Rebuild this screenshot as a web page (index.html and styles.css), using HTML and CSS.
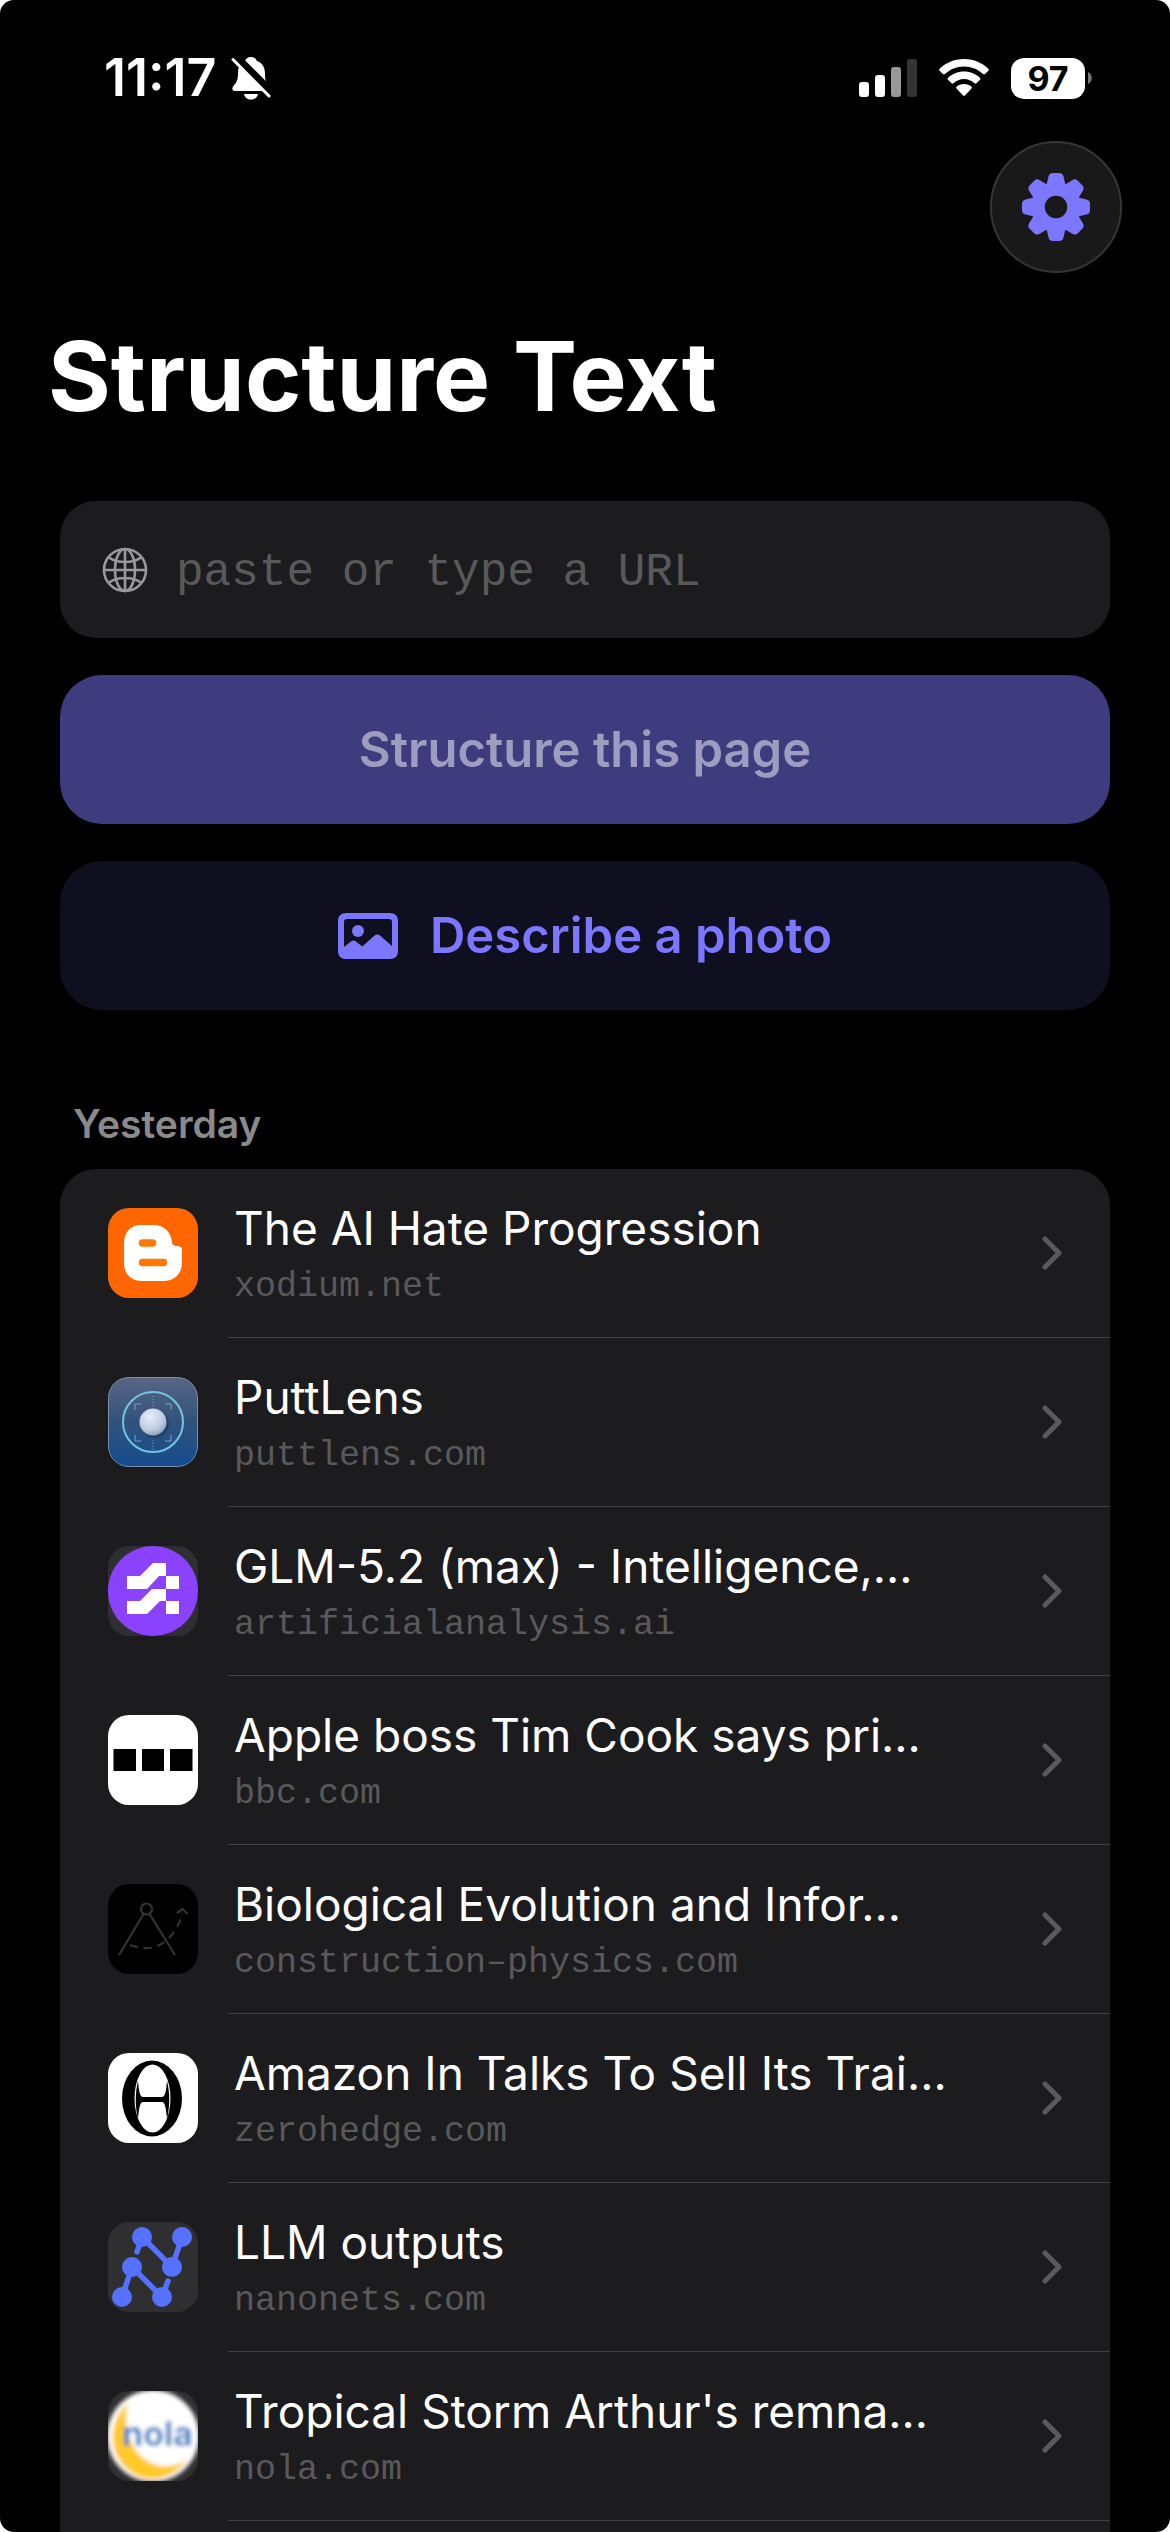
FILE: index.html
```html
<!DOCTYPE html>
<html lang="en">
<head>
    <meta charset="UTF-8">
    <meta name="viewport" content="width=device-width, initial-scale=1.0">
    <title>Structure Text</title>
    <link rel="stylesheet" href="styles.css">
</head>
<body>
    <div class="screen">
        <header class="status-bar">
            <div class="status-left">
                <span class="clock">11:17</span>
                <svg class="bell" viewBox="0 0 40 44" aria-hidden="true">
                    <path d="M20 1c3 0 5 1.500 6 4 6 2 8 7 8 13 0 6 1 9 4 12 2 2 1 5-1 5H4c-3 0-3.500-3-1.500-5C5 27 7 24 7 18 7 11 9 7 14 5c1-2.500 3-4 6-4z" fill="#fff"/>
                    <path d="M13 38h14c-1 4-3.500 5.500-7 5.500S14 42 13 38z" fill="#fff"/>
                    <path d="M4 0L41 37" stroke="#000" stroke-width="8"/>
                    <path d="M2 3.500L38 40" stroke="#fff" stroke-width="3" stroke-linecap="round"/>
                </svg>
            </div>
            <div class="status-right">
                <svg class="signal" viewBox="0 0 58 38" aria-hidden="true">
                    <rect x="0" y="23" width="10" height="15" rx="3" fill="#fff"/>
                    <rect x="16" y="16" width="10" height="22" rx="3" fill="#fff"/>
                    <rect x="32" y="8" width="10" height="30" rx="3" fill="#999"/>
                    <rect x="48" y="0" width="10" height="38" rx="3" fill="#333"/>
                </svg>
                <svg class="wifi" viewBox="0 0 50 38" aria-hidden="true">
                    <path d="M25 0C15 0 6.500 4 .6 9.800c-.6.600-.6 1.300 0 1.900l3.400 3.400c.6.600 1.300.600 1.900 0C11 10.300 17.500 7.500 25 7.500s14 2.800 19.100 7.600c.6.600 1.300.600 1.900 0l3.400-3.400c.6-.600.6-1.300 0-1.900C43.500 4 35 0 25 0z" fill="#fff"/>
                    <path d="M25 12.500c-6.500 0-12 2.500-16 6.300-.6.600-.6 1.300 0 1.900l3.600 3.500c.6.600 1.200.600 1.900.1C17.300 21.800 20.900 20 25 20s7.700 1.800 10.500 4.300c.7.500 1.300.500 1.900-.1l3.600-3.500c.6-.600.6-1.300 0-1.900-4-3.800-9.500-6.300-16-6.300z" fill="#fff"/>
                    <path d="M25 25c-3 0-5.500 1-7.500 2.700-.6.600-.6 1.300 0 1.900l6.600 6.900c.5.600 1.300.600 1.800 0l6.600-6.900c.6-.600.6-1.300 0-1.900C30.500 26 28 25 25 25z" fill="#fff"/>
                </svg>
                <div class="battery">
                    <span class="battery-level">97</span>
                    <svg class="battery-cap" viewBox="0 0 4 12" aria-hidden="true"><path d="M0 0c5 2 5 10 0 12z" fill="#777"/></svg>
                </div>
            </div>
        </header>

        <nav class="toolbar">
            <button class="settings" type="button" aria-label="Settings">
                <svg viewBox="-34 -34 68 68" aria-hidden="true">
                    <g fill="#7b78ff">
                        <path id="tooth" d="M-10-20L-7.500-30.500Q-6.500-34-3.500-34H3.500Q6.500-34 7.500-30.500L10-20z"/>
                        <use href="#tooth" transform="rotate(45)"/>
                        <use href="#tooth" transform="rotate(90)"/>
                        <use href="#tooth" transform="rotate(135)"/>
                        <use href="#tooth" transform="rotate(180)"/>
                        <use href="#tooth" transform="rotate(225)"/>
                        <use href="#tooth" transform="rotate(270)"/>
                        <use href="#tooth" transform="rotate(315)"/>
                    </g>
                    <circle r="18" fill="none" stroke="#7b78ff" stroke-width="13.500"/>
                </svg>
            </button>
        </nav>

        <main>
            <h1>Structure Text</h1>

            <form class="actions">
                <label class="url-field">
                    <svg viewBox="0 0 46 46" fill="none" stroke="#98989e" stroke-width="2.600" aria-hidden="true">
                        <circle cx="23" cy="23" r="21"/>
                        <ellipse cx="23" cy="23" rx="10" ry="21"/>
                        <path d="M23 2v42M2 23h42M7 10.500c8 6 24 6 32 0M7 35.500c8-6 24-6 32 0"/>
                    </svg>
                    <input type="text" placeholder="paste or type a URL" aria-label="URL">
                </label>
                <button class="btn btn-primary" type="submit" disabled>Structure this page</button>
                <button class="btn btn-secondary" type="button">
                    <svg viewBox="0 0 60 46" aria-hidden="true">
                        <path fill-rule="evenodd" d="M8 0h44c5 0 8 3 8 8v30c0 5-3 8-8 8H8c-5 0-8-3-8-8V8c0-5 3-8 8-8zM9 6C7 6 6 7 6 9V34l7-5.500c1.800-1.400 3.200-1.400 5 0l6.300 5L36 23c2.200-1.900 4.300-1.900 6.500 0L54 33V9C54 7 53 6 51 6z" fill="#7b78ff"/>
                        <circle cx="20" cy="18" r="6" fill="#7b78ff"/>
                    </svg>
                    <span>Describe a photo</span>
                </button>
            </form>

            <section class="history">
                <h2>Yesterday</h2>
                <ul class="list">
                    <li>
                        <a href="#">
                            <svg class="favicon" viewBox="0 0 90 90" aria-hidden="true">
                                <rect width="90" height="90" fill="#f60"/>
                                <path d="M33 17h13c10 0 17 7 18 17 0 3 2 4 5 4 3 0 5 1 5 4v13c0 11-8 18-18 18H34c-11 0-18-7-18-18V35c0-11 7-18 17-18z" fill="#fff"/>
                                <path d="M34.500 35h10M34.500 54.500h21" stroke="#f70" stroke-width="7.500" stroke-linecap="round"/>
                            </svg>
                            <span class="text"><span class="title">The AI Hate Progression</span><span class="domain">xodium.net</span></span>
                            <svg class="chevron" viewBox="0 0 20 34" aria-hidden="true"><path d="M3 3L17 17L3 31"/></svg>
                        </a>
                    </li>
                    <li>
                        <a href="#">
                            <svg class="favicon" viewBox="0 0 90 90" aria-hidden="true">
                                <defs>
                                    <linearGradient id="sky" x1="0" y1="0" x2="0" y2="1"><stop offset="0" stop-color="#5a6584"/><stop offset=".5" stop-color="#31527c"/><stop offset="1" stop-color="#154c8f"/></linearGradient>
                                    <radialGradient id="ball" cx=".4" cy=".3" r=".8"><stop offset="0" stop-color="#e8eefa"/><stop offset=".6" stop-color="#c0cde0"/><stop offset="1" stop-color="#7e94b3"/></radialGradient>
                                </defs>
                                <rect width="90" height="90" fill="url(#sky)"/>
                                <rect x=".5" y=".5" width="89" height="89" rx="20" fill="none" stroke="#7d8dad"/>
                                <circle cx="45" cy="45" r="30" fill="none" stroke="#74c5df" stroke-width="2"/>
                                <path d="M45 19v12M45 60v13" stroke="#6fb5d2" stroke-dasharray="1 2"/>
                                <path d="M27 33v-6h6M57 27h6v6M63 58v6h-6M33 64h-6v-6" fill="none" stroke="#6da8c8"/>
                                <circle cx="47" cy="47" r="14" fill="#244367"/>
                                <circle cx="45" cy="45" r="13.500" fill="url(#ball)"/>
                            </svg>
                            <span class="text"><span class="title">PuttLens</span><span class="domain">puttlens.com</span></span>
                            <svg class="chevron" viewBox="0 0 20 34" aria-hidden="true"><path d="M3 3L17 17L3 31"/></svg>
                        </a>
                    </li>
                    <li>
                        <a href="#">
                            <svg class="favicon" viewBox="0 0 90 90" aria-hidden="true">
                                <circle cx="45" cy="45" r="45" fill="#8a42ff"/>
                                <path d="M19 30h13l13-13h13v13h13v13H58V30h-7L39 43H19zM19 55h13l12-12h14v12h13v13H58V55h-6L39 68H19z" fill="#fff"/>
                            </svg>
                            <span class="text"><span class="title">GLM-5.2 (max) - Intelligence,…</span><span class="domain">artificialanalysis.ai</span></span>
                            <svg class="chevron" viewBox="0 0 20 34" aria-hidden="true"><path d="M3 3L17 17L3 31"/></svg>
                        </a>
                    </li>
                    <li>
                        <a href="#">
                            <svg class="favicon" viewBox="0 0 90 90" aria-hidden="true">
                                <rect width="90" height="90" fill="#fff"/>
                                <path d="M5.500 34h22.500v22H5.500zM34 34h22v22H34zM62 34h22.500v22H62z"/>
                            </svg>
                            <span class="text"><span class="title">Apple boss Tim Cook says pri…</span><span class="domain">bbc.com</span></span>
                            <svg class="chevron" viewBox="0 0 20 34" aria-hidden="true"><path d="M3 3L17 17L3 31"/></svg>
                        </a>
                    </li>
                    <li>
                        <a href="#">
                            <svg class="favicon" viewBox="0 0 90 90" fill="none" stroke="#333" stroke-width="2.200" aria-hidden="true">
                                <rect width="90" height="90" fill="#000" stroke="none"/>
                                <circle cx="38.500" cy="25" r="5.500"/>
                                <path d="M35.500 30L11 71M41.500 30L67 71"/>
                                <path d="M22 61c13 5 26 4 36-4 8-7 14-17 16-28" stroke-dasharray="8 6"/>
                                <path d="M69 29l5.500-4 5 5"/>
                            </svg>
                            <span class="text"><span class="title">Biological Evolution and Infor…</span><span class="domain">construction–physics.com</span></span>
                            <svg class="chevron" viewBox="0 0 20 34" aria-hidden="true"><path d="M3 3L17 17L3 31"/></svg>
                        </a>
                    </li>
                    <li>
                        <a href="#">
                            <svg class="favicon" viewBox="0 0 90 90" aria-hidden="true">
                                <rect width="90" height="90" fill="#fff"/>
                                <ellipse cx="44" cy="45.500" rx="30" ry="38"/>
                                <ellipse cx="44.500" cy="45.500" rx="18" ry="34" fill="#fff"/>
                                <path d="M30 28c1 11 2 16 5 16h19c3 0 4-5 5-16 3 12 3 25 0 38-1-11-2-17-5-17H35c-3 0-4 6-5 17-3-12-3-26 0-38z"/>
                            </svg>
                            <span class="text"><span class="title">Amazon In Talks To Sell Its Trai…</span><span class="domain">zerohedge.com</span></span>
                            <svg class="chevron" viewBox="0 0 20 34" aria-hidden="true"><path d="M3 3L17 17L3 31"/></svg>
                        </a>
                    </li>
                    <li>
                        <a href="#">
                            <svg class="favicon" viewBox="0 0 90 90" aria-hidden="true">
                                <g fill="#5472ff">
                                    <circle cx="34" cy="15" r="10"/><circle cx="74" cy="15" r="10"/>
                                    <circle cx="24" cy="45" r="10"/><circle cx="64" cy="45" r="10"/>
                                    <circle cx="14" cy="75" r="10"/><circle cx="54" cy="75" r="10"/>
                                </g>
                                <path d="M34 15l-5 15M34 15l30 30L74 15M14 75l10-30 30 30 6-16" fill="none" stroke="#5472ff" stroke-width="5.500" stroke-linecap="round"/>
                            </svg>
                            <span class="text"><span class="title">LLM outputs</span><span class="domain">nanonets.com</span></span>
                            <svg class="chevron" viewBox="0 0 20 34" aria-hidden="true"><path d="M3 3L17 17L3 31"/></svg>
                        </a>
                    </li>
                    <li>
                        <a href="#">
                            <svg class="favicon" viewBox="0 0 90 90" aria-hidden="true">
                                <defs><filter id="soft" x="-20%" y="-20%" width="140%" height="140%"><feGaussianBlur stdDeviation="2"/></filter></defs>
                                <g filter="url(#soft)">
                                    <circle cx="45" cy="45" r="46" fill="#fff"/>
                                    <path d="M20 12C-2 32 0 66 24 82c18 12 42 6 56-14-18 12-38 8-50-6C18 48 16 30 20 12z" fill="#ffc926"/>
                                    <text class="nola" x="14" y="55">nola</text>
                                </g>
                            </svg>
                            <span class="text"><span class="title">Tropical Storm Arthur's remna…</span><span class="domain">nola.com</span></span>
                            <svg class="chevron" viewBox="0 0 20 34" aria-hidden="true"><path d="M3 3L17 17L3 31"/></svg>
                        </a>
                    </li>
                </ul>
            </section>
        </main>
    </div>
</body>
</html>
```
FILE: styles.css
```css
* {
    box-sizing: border-box;
}

body {
    margin: 0;
    background-color: #fff;
    color: #fff;
    font-family: Inter, "Liberation Sans", sans-serif;
}

.screen {
    display: flex;
    flex-direction: column;
    min-height: 100vh;
    background-color: #000;
    border-radius: 14px;
    overflow: hidden;
}

.status-bar {
    display: flex;
    justify-content: space-between;
    align-items: center;
    padding: 48px 78px 0 104px;
    height: 108px;
}

.status-left,
.status-right {
    display: flex;
    align-items: center;
}

.status-left {
    gap: 14px;
}

.status-right {
    gap: 22px;
}

.clock {
    font-size: 52px;
    font-weight: 600;
    line-height: 60px;
}

.bell {
    width: 40px;
    height: 44px;
}

.signal {
    width: 58px;
    height: 38px;
}

.wifi {
    width: 50px;
    height: 38px;
}

.battery {
    display: flex;
    align-items: center;
    gap: 3px;
}

.battery-level {
    width: 74px;
    border-radius: 13px;
    background-color: #fff;
    color: #000;
    font-size: 34px;
    font-weight: 700;
    line-height: 41px;
    text-align: center;
}

.battery-cap {
    width: 4px;
    height: 12px;
}

.toolbar {
    display: flex;
    justify-content: flex-end;
    padding: 33px 48px 0;
}

.settings {
    display: flex;
    align-items: center;
    justify-content: center;
    width: 132px;
    height: 132px;
    padding: 0;
    border: 2px solid #363636;
    border-radius: 50%;
    background-color: #191919;
}

.settings svg {
    width: 68px;
    height: 68px;
}

main {
    display: flex;
    flex-direction: column;
    flex: 1;
}

h1 {
    margin: 0;
    padding: 43px 48px 65px;
    font-size: 96px;
    font-weight: 700;
    line-height: 120px;
}

.actions {
    display: flex;
    flex-direction: column;
    gap: 37px;
    margin: 0 60px;
}

.url-field {
    display: flex;
    align-items: center;
    gap: 28px;
    height: 137px;
    padding: 0 42px;
    border-radius: 36px;
    background-color: #1c1c1e;
}

.url-field svg {
    width: 46px;
    height: 46px;
}

.url-field input {
    flex: 1;
    min-width: 0;
    padding: 6px 0 0;
    border: 0;
    outline: 0;
    background: none;
    color: #fff;
    font-family: "Liberation Mono", monospace;
    font-size: 46px;
}

.url-field input::placeholder {
    color: #59595c;
}

.btn {
    display: flex;
    align-items: center;
    justify-content: center;
    gap: 32px;
    height: 149px;
    border: 0;
    border-radius: 42px;
    font-family: inherit;
    font-size: 49px;
    font-weight: 600;
}

.btn svg {
    width: 60px;
    height: 46px;
}

.btn-primary {
    background-color: #3e3c7f;
    color: #9e9dbf;
}

.btn-secondary {
    background-color: #100f20;
    color: #7b78ff;
}

.history {
    display: flex;
    flex-direction: column;
    flex: 1;
    margin: 0 60px;
}

h2 {
    margin: 0;
    padding: 90px 13px 21px;
    color: #8a8a8d;
    font-size: 39px;
    font-weight: 600;
    line-height: 48px;
}

.list {
    flex: 1;
    margin: 0;
    padding: 0;
    border-radius: 36px 36px 0 0;
    background-color: #1c1c1e;
    list-style: none;
}

.list a {
    display: flex;
    align-items: center;
    height: 169px;
    padding: 0 48px 1px;
    /* separator starts just left of the text */
    background: linear-gradient(#414144, #414144) 168px 100% / 100% 1px no-repeat;
    color: #fff;
    text-decoration: none;
}

.favicon {
    flex: none;
    width: 90px;
    height: 90px;
    margin-right: 36px;
    border-radius: 21px;
    background-color: #2f2f32;
}

.nola {
    fill: #2f7fc4;
    font-size: 34px;
    font-weight: 700;
}

.text {
    display: flex;
    flex-direction: column;
    flex: 1;
    min-width: 0;
}

.title {
    font-size: 46px;
    line-height: 68px;
    white-space: nowrap;
}

.domain {
    color: #59595c;
    font-family: "Liberation Mono", monospace;
    font-size: 35px;
    line-height: 50px;
}

.chevron {
    width: 20px;
    height: 34px;
    fill: none;
    stroke: #5a5a5e;
    stroke-width: 5;
    stroke-linecap: round;
    stroke-linejoin: round;
}
```
